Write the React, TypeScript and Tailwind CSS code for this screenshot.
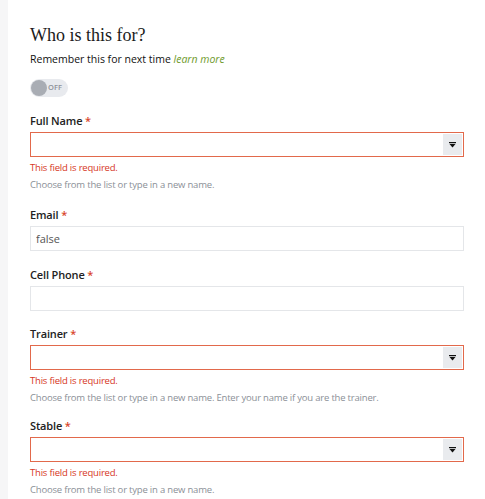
import { useState } from 'react';

const Label = ({ text }: { text: string }) => (
  <label className="block text-[11px] font-semibold leading-[16px] tracking-[-0.15px] text-[#222]">
    {text} <span className="text-[#d9452b]">*</span>
  </label>
);

const Caret = () => (
  <svg width="7" height="6" viewBox="0 0 7 6" fill="#111">
    <rect x="0" y="0" width="7" height="1.2" />
    <path d="M0.5 2h6L3.5 5.5z" />
  </svg>
);

const SelectField = ({ label, help, className }: { label: string; help: string; className?: string }) => (
  <div className={className}>
    <Label text={label} />
    <div className="mt-[3px] flex h-[25px] items-stretch border border-[#e2694b] bg-white">
      <input className="min-w-0 flex-1 bg-transparent px-[5px] text-[11px] outline-none" />
      <div className="my-[1px] mr-[1px] flex w-[19px] items-center justify-center bg-[#e9ebee]">
        <Caret />
      </div>
    </div>
    <p className="mt-[4px] text-[9.5px] leading-[14px] tracking-[-0.2px] text-[#d6361e]">This field is required.</p>
    <p className="mt-[3px] text-[9.5px] leading-[14px] tracking-[-0.2px] text-[#8b9097]">{help}</p>
  </div>
);

const TextField = ({ label, value, className }: { label: string; value?: string; className?: string }) => (
  <div className={className}>
    <Label text={label} />
    <input
      defaultValue={value}
      className="mt-[3px] block h-[25px] w-full border border-[#e4e6e9] bg-white px-[5px] text-[11px] text-[#555] outline-none"
    />
  </div>
);

export default function App() {
  const [on, setOn] = useState(false);

  return (
    <div className="flex min-h-[499px] bg-white" style={{ fontFamily: '"Open Sans", "Noto Sans", sans-serif' }}>
      <div className="w-[8px] shrink-0 bg-[#f6f6f7]" />
      <div className="w-[456px] pl-[22px] pt-[22px]">
        <h2 className="text-[18px] leading-[26px] text-[#1b1b1b]" style={{ fontFamily: '"Liberation Serif", serif' }}>
          Who is this for?
        </h2>
        <p className="mt-[3px] text-[10.5px] leading-[16px] text-[#111]">
          Remember this for next time <em className="text-[#6e9a2a]">learn more</em>
        </p>
        <button
          onClick={() => setOn(!on)}
          className="mt-[12px] flex h-[18px] w-[38px] items-center rounded-full bg-[#e8eaee] pl-[1px]"
        >
          <span className="h-[16px] w-[16px] rounded-full bg-[#a9adb4]" />
          <span className="ml-[1px] text-[7.5px] font-semibold text-[#8d9299]">OFF</span>
        </button>

        <div className="mt-[16px] flex flex-col gap-[15px]">
          <SelectField label="Full Name" help="Choose from the list or type in a new name." />
          <TextField label="Email" value="false" />
          <TextField label="Cell Phone" className="mt-[1px]" />
          <SelectField
            label="Trainer"
            help="Choose from the list or type in a new name. Enter your name if you are the trainer."
          />
          <SelectField label="Stable" help="Choose from the list or type in a new name." className="-mt-[2px]" />
        </div>
      </div>
    </div>
  );
}
